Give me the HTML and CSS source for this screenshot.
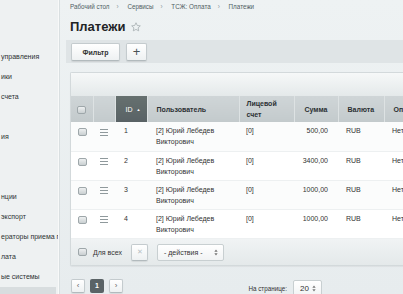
FILE: index.html
```html
<!DOCTYPE html>
<html lang="ru">
<head>
<meta charset="utf-8">
<title>Платежи</title>
<link rel="stylesheet" href="styles.css">
</head>
<body>
<div class="page">
  <aside class="sidebar">
    <div class="side-top"></div>
    <div class="side-item">управления</div>
    <div class="side-item">ики</div>
    <div class="side-item">счета</div>
    <div class="side-item"></div>
    <div class="side-item">ия</div>
    <div class="side-item"></div>
    <div class="side-item"></div>
    <div class="side-item">нции</div>
    <div class="side-item">экспорт</div>
    <div class="side-item">ераторы приема п</div>
    <div class="side-item">лата</div>
    <div class="side-item">ые системы</div>
    <div class="side-item active"></div>
  </aside>
  <main class="main">
    <div class="crumbs">
      <span>Рабочий стол</span><span class="sep">›</span>
      <span>Сервисы</span><span class="sep">›</span>
      <span>ТСЖ: Оплата</span><span class="sep">›</span>
      <span>Платежи</span>
    </div>
    <h1 class="title">Платежи
      <svg class="star" viewBox="0 0 20 20" width="10" height="10"><path d="M10 1.5l2.6 5.5 6 .7-4.4 4.1 1.2 5.9L10 14.8 4.6 17.7l1.2-5.9L1.4 7.7l6-.7z" fill="none" stroke="#a4adb0" stroke-width="1.6" stroke-linejoin="round"/></svg>
    </h1>
    <div class="toolbar">
      <button class="btn btn-filter">Фильтр</button>
      <button class="btn btn-plus">+</button>
    </div>
    <div class="card">
      <div class="card-top"></div>
      <table class="grid">
        <colgroup>
          <col class="c-check"><col class="c-menu"><col class="c-id"><col class="c-user"><col class="c-acc"><col class="c-sum"><col class="c-cur"><col class="c-paid">
        </colgroup>
        <thead>
          <tr>
            <th class="center"><span class="cb"></span></th>
            <th></th>
            <th class="sorted">ID <span class="arrow">▲</span></th>
            <th>Пользователь</th>
            <th>Лицевой<br>счет</th>
            <th class="center">Сумма</th>
            <th>Валюта</th>
            <th>Оплачено</th>
          </tr>
        </thead>
        <tbody>
          <tr>
            <td class="center"><span class="cb"></span></td>
            <td class="center"><span class="menu"></span></td>
            <td>1</td>
            <td>[2] Юрий Лебедев<br>Викторович</td>
            <td>[0]</td>
            <td class="right">500,00</td>
            <td>RUB</td>
            <td>Нет</td>
          </tr>
          <tr>
            <td class="center"><span class="cb"></span></td>
            <td class="center"><span class="menu"></span></td>
            <td>2</td>
            <td>[2] Юрий Лебедев<br>Викторович</td>
            <td>[0]</td>
            <td class="right">3400,00</td>
            <td>RUB</td>
            <td>Нет</td>
          </tr>
          <tr>
            <td class="center"><span class="cb"></span></td>
            <td class="center"><span class="menu"></span></td>
            <td>3</td>
            <td>[2] Юрий Лебедев<br>Викторович</td>
            <td>[0]</td>
            <td class="right">1000,00</td>
            <td>RUB</td>
            <td>Нет</td>
          </tr>
          <tr>
            <td class="center"><span class="cb"></span></td>
            <td class="center"><span class="menu"></span></td>
            <td>4</td>
            <td>[2] Юрий Лебедев<br>Викторович</td>
            <td>[0]</td>
            <td class="right">1000,00</td>
            <td>RUB</td>
            <td>Нет</td>
          </tr>
        </tbody>
      </table>
      <div class="card-foot">
        <label class="all"><span class="cb"></span><span>Для всех</span></label>
        <button class="btn btn-x">✕</button>
        <div class="select select-actions"><span>- действия -</span><svg viewBox="0 0 6 10" width="4" height="7"><path d="M3 0.5L5.5 4H0.5zM3 9.5L0.5 6h5z" fill="#777"/></svg></div>
      </div>
    </div>
    <div class="pager">
      <div class="pages">
        <button class="btn pg">‹</button>
        <button class="pg current">1</button>
        <button class="btn pg">›</button>
      </div>
      <div class="per-page">
        <span>На странице:</span>
        <div class="select select-num"><span>20</span><svg viewBox="0 0 6 10" width="4" height="7"><path d="M3 0.5L5.5 4H0.5zM3 9.5L0.5 6h5z" fill="#777"/></svg></div>
      </div>
    </div>
  </main>
</div>
</body>
</html>
```

FILE: styles.css
```css
html, body {
  margin: 0;
  padding: 0;
}
body {
  width: 403px;
  height: 294px;
  overflow: hidden;
  font-family: "Liberation Sans", Arial, sans-serif;
  color: #2f3436;
  background: #e9eef0;
}
.page {
  display: flex;
  width: 403px;
  height: 294px;
  overflow: hidden;
}
.sidebar {
  width: 58px;
  flex: 0 0 58px;
  background: #eef1f2;
  border-right: 1px solid #f8f9f9;
  box-shadow: 1px 0 0 #d9dfe1;
  display: flex;
  flex-direction: column;
  overflow: hidden;
}
.side-top {
  height: 47px;
  flex: 0 0 auto;
}
.side-item {
  flex: 0 0 auto;
  height: 20px;
  line-height: 20px;
  font-size: 7px;
  color: #2d3133;
  white-space: nowrap;
  padding-left: 1px;
}
.side-item.active {
  margin-top: 0;
  background: #d8dddf;
  width: 55px;
}
.main {
  flex: 1;
  min-width: 0;
  padding-left: 10px;
  margin-left: 1px;
  background: linear-gradient(#eef2f3, #e7ecee);
}
.crumbs {
  padding-top: 2px;
  height: 10px;
  line-height: 10px;
  font-size: 6.3px;
  color: #4f5e64;
  white-space: nowrap;
}
.crumbs .sep {
  color: #8c989c;
  margin: 0 7px;
}
.title {
  margin: 7px 0 0;
  height: 16px;
  line-height: 16px;
  font-size: 13px;
  font-weight: bold;
  color: #1f2426;
  display: flex;
  align-items: center;
  gap: 6px;
}
.star {
  margin-top: -1px;
}
.toolbar {
  margin-top: 5px;
  margin-left: -4px;
  height: 23px;
  box-sizing: border-box;
  padding: 3px 5px 2px;
  background: #dfe4e6;
  display: flex;
  gap: 6px;
}
.btn {
  box-sizing: border-box;
  border: 1px solid #c4cbce;
  border-bottom-color: #b2babd;
  border-radius: 2px;
  background: linear-gradient(#ffffff, #eef1f2);
  box-shadow: 0 1px 1px rgba(0,0,0,0.08);
  font-family: inherit;
  color: #333;
  padding: 0;
  cursor: pointer;
}
.btn-filter {
  width: 49px;
  height: 18px;
  font-size: 7px;
  font-weight: bold;
}
.btn-plus {
  width: 21px;
  height: 18px;
  font-size: 13px;
  line-height: 14px;
  color: #4a5255;
}
.card {
  margin-top: 9px;
  width: 360px;
  border: 1px solid #d3d9db;
  border-right: none;
  border-radius: 2px 0 0 2px;
  background: #fff;
  box-shadow: 0 1px 1px rgba(0,0,0,0.05);
}
.card-top {
  height: 23px;
  background: linear-gradient(#f6f8f8, #e4e9ea);
}
.grid {
  border-collapse: collapse;
  table-layout: fixed;
  width: 360px;
  font-size: 7px;
}
.c-check { width: 22px; }
.c-menu { width: 22px; }
.c-id { width: 32px; }
.c-user { width: 92px; }
.c-acc { width: 55px; }
.c-sum { width: 44px; }
.c-cur { width: 46px; }
.c-paid { width: 47px; }
.grid th {
  height: 26px;
  box-sizing: border-box;
  padding: 0 0 0 9px;
  text-align: left;
  font-weight: bold;
  line-height: 11px;
  color: #2b3033;
  background: linear-gradient(#cfd5d7, #c3cacc);
  border-left: 1px solid #dde2e3;
  white-space: nowrap;
}
.grid th:first-child {
  border-left: none;
}
.grid th:nth-child(5) {
  padding-left: 7px;
}
.grid th.center,
.grid td.center {
  text-align: center;
  padding-left: 0;
}
.grid th.sorted {
  background: linear-gradient(#66706f, #596265);
  color: #fff;
  font-weight: normal;
  padding-left: 10px;
}
.arrow {
  font-size: 4px;
  vertical-align: 1px;
  margin-left: 2px;
}
.grid td {
  height: 29px;
  box-sizing: border-box;
  padding: 3px 0 0 9px;
  vertical-align: top;
  line-height: 11px;
  color: #333;
  border-bottom: 1px solid #edf0f1;
  white-space: nowrap;
}
.grid td:nth-child(5) {
  padding-left: 7px;
}
.grid td:nth-child(7),
.grid td:nth-child(8) {
  padding-left: 8px;
}
.grid td.right {
  text-align: right;
  padding-left: 0;
  padding-right: 10px;
}
.grid td.center {
  padding-top: 4px;
}
.grid tbody tr:nth-child(odd) td {
  background: #fbfcfc;
}
.cb {
  display: inline-block;
  width: 9px;
  height: 8px;
  box-sizing: border-box;
  border: 1px solid #9ea7aa;
  border-radius: 2px;
  background: linear-gradient(#eef0f1, #c9cfd1);
  vertical-align: middle;
}
.menu {
  display: inline-block;
  width: 8px;
  height: 5px;
  border-top: 1px solid #8f999c;
  border-bottom: 1px solid #8f999c;
  position: relative;
  vertical-align: middle;
}
.menu::after {
  content: "";
  position: absolute;
  left: 0;
  right: 0;
  top: 2px;
  border-top: 1px solid #8f999c;
}
.card-foot {
  height: 26px;
  box-sizing: border-box;
  padding: 5px 0 0 7px;
  background: linear-gradient(#f0f3f4, #e4e9ea);
  display: flex;
  align-items: flex-start;
  font-size: 7px;
}
.all {
  display: flex;
  align-items: center;
  gap: 6px;
  height: 17px;
  width: 53px;
  color: #333;
}
.btn-x {
  width: 17px;
  height: 17px;
  font-size: 7px;
  color: #b7bfc2;
}
.select {
  box-sizing: border-box;
  height: 17px;
  border: 1px solid #c8cfd1;
  border-radius: 2px;
  background: linear-gradient(#ffffff, #f1f3f4);
  display: flex;
  align-items: center;
  justify-content: space-between;
  padding: 0 5px 0 6px;
  color: #333;
}
.select-actions {
  margin-left: 9px;
  width: 67px;
  font-size: 7px;
}
.pager {
  margin-top: 10px;
  display: flex;
  align-items: center;
  justify-content: space-between;
  width: 252px;
}
.pages {
  display: flex;
  gap: 5px;
  padding-left: 1px;
}
.pg {
  width: 14px;
  height: 14px;
  box-sizing: border-box;
  font-size: 8px;
  line-height: 12px;
  color: #666;
  padding: 0;
  font-family: inherit;
}
.pg.current {
  border: none;
  border-radius: 2px;
  background: #5a6366;
  color: #fff;
  font-weight: bold;
  font-size: 7px;
}
.per-page {
  display: flex;
  align-items: center;
  gap: 6px;
  font-size: 6.3px;
  color: #333;
  margin-top: 4px;
}
.select-num {
  width: 29px;
  height: 17px;
  font-size: 8px;
}
```
